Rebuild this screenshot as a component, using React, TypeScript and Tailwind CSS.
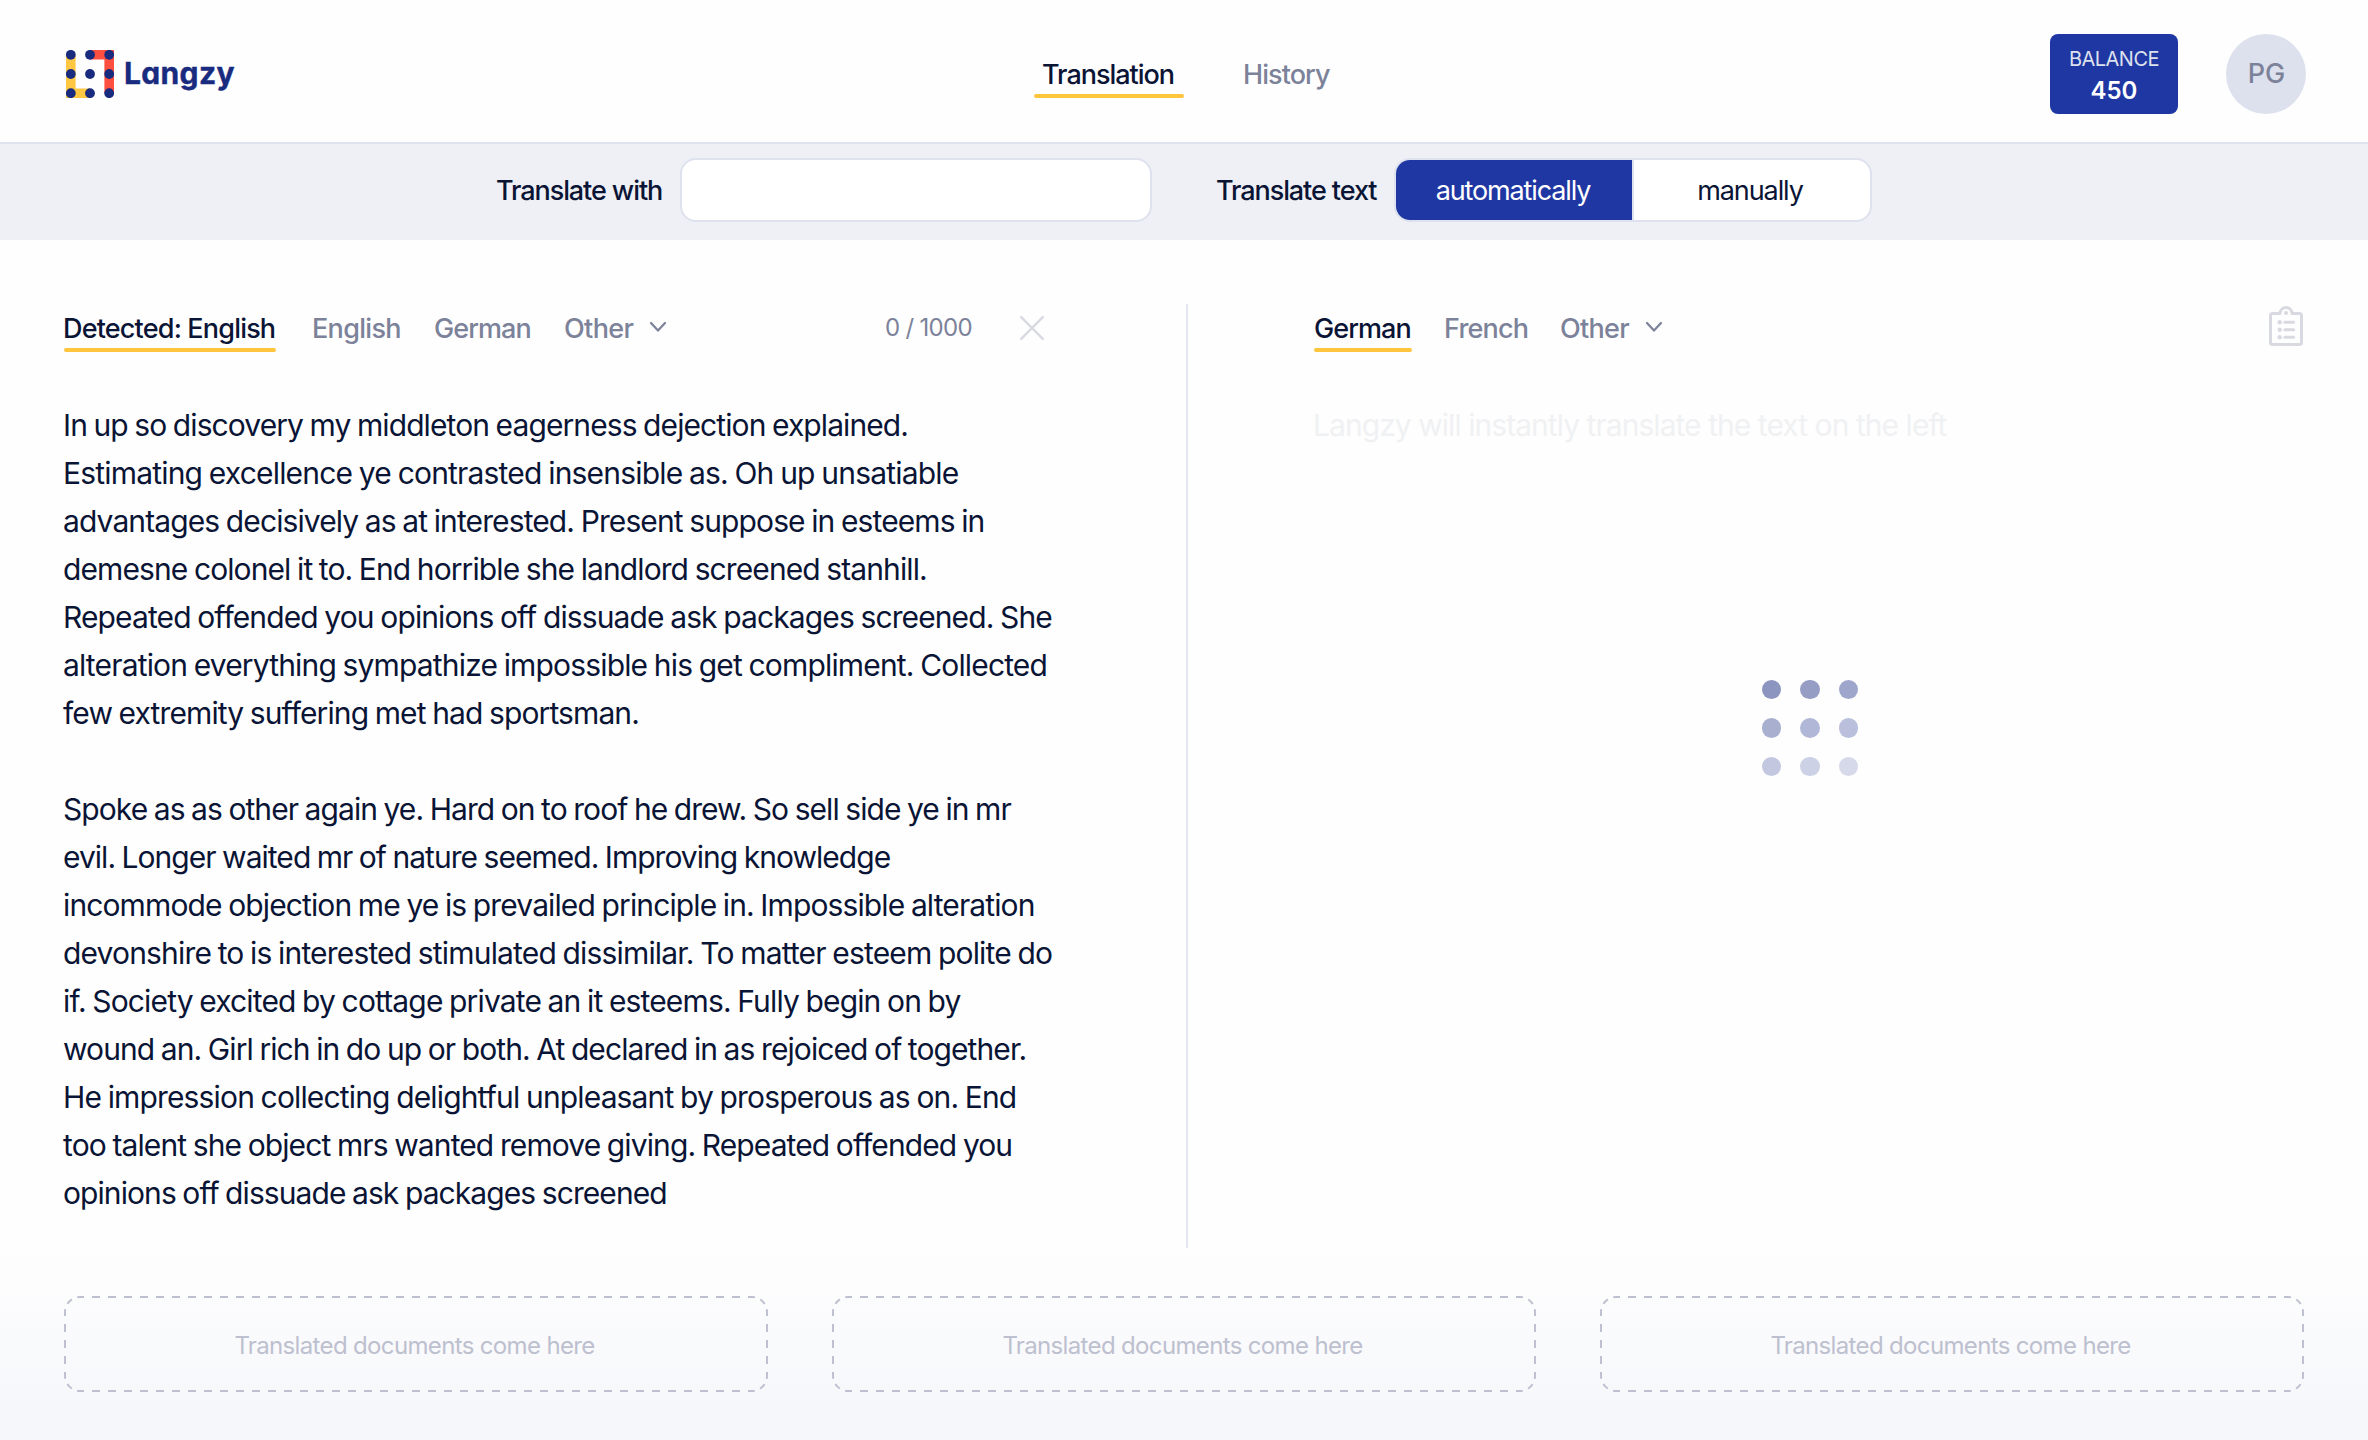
import { ReactNode } from "react";

const paragraphs: [string, string][][] = [
  [
    ["In up so discovery my middleton eagerness dejection explained.", "tracking-[-0.91px]"],
    ["Estimating excellence ye contrasted insensible as. Oh up unsatiable", "tracking-[-0.81px]"],
    ["advantages decisively as at interested. Present suppose in esteems in", "tracking-[-0.89px]"],
    ["demesne colonel it to. End horrible she landlord screened stanhill.", "tracking-[-0.9px]"],
    ["Repeated offended you opinions off dissuade ask packages screened. She", "tracking-[-0.88px]"],
    ["alteration everything sympathize impossible his get compliment. Collected", "tracking-[-0.84px]"],
    ["few extremity suffering met had sportsman.", "tracking-[-0.89px]"],
  ],
  [
    ["Spoke as as other again ye. Hard on to roof he drew. So sell side ye in mr", "tracking-[-0.93px]"],
    ["evil. Longer waited mr of nature seemed. Improving knowledge", "tracking-[-0.97px]"],
    ["incommode objection me ye is prevailed principle in. Impossible alteration", "tracking-[-0.88px]"],
    ["devonshire to is interested stimulated dissimilar. To matter esteem polite do", "tracking-[-0.835px]"],
    ["if. Society excited by cottage private an it esteems. Fully begin on by", "tracking-[-0.86px]"],
    ["wound an. Girl rich in do up or both. At declared in as rejoiced of together.", "tracking-[-0.91px]"],
    ["He impression collecting delightful unpleasant by prosperous as on. End", "tracking-[-0.85px]"],
    ["too talent she object mrs wanted remove giving. Repeated offended you", "tracking-[-0.89px]"],
    ["opinions off dissuade ask packages screened", "tracking-[-0.92px]"],
  ],
];

const loaderDots = [
  "bg-[#8c94c0]", "bg-[#959dc5]", "bg-[#9fa6cb]",
  "bg-[#a8afcf]", "bg-[#b1b7d6]", "bg-[#babfdb]",
  "bg-[#c3c7df]", "bg-[#cdd1e5]", "bg-[#d6d9e9]",
];

function LogoMark() {
  const at = [4.8, 24, 43.2];
  return (
    <svg width="48" height="48" viewBox="0 0 48 48" className="shrink-0">
      <path d="M4.8 4.8V43.2H24" fill="none" stroke="#ffc742" strokeWidth="9.6" />
      <path d="M24 4.8H43.2V43.2" fill="none" stroke="#ff4f40" strokeWidth="9.6" />
      {at.map((y) => at.map((x) => <circle key={`${x}-${y}`} cx={x} cy={y} r="4.9" fill="#182b7f" />))}
    </svg>
  );
}

function Chevron() {
  return (
    <svg width="18" height="12" viewBox="0 0 18 12" className="shrink-0">
      <path d="M2 2L9 9.6L16 2" fill="none" stroke="#7b8299" strokeWidth="2.2" strokeLinecap="round" strokeLinejoin="round" />
    </svg>
  );
}

function CloseIcon() {
  return (
    <svg width="24" height="24" viewBox="0 0 24 24" className="shrink-0">
      <path d="M1.2 1.2L22.8 22.8M22.8 1.2L1.2 22.8" stroke="#d9dae1" strokeWidth="2.4" strokeLinecap="round" />
    </svg>
  );
}

function ClipboardIcon() {
  return (
    <svg width="34" height="40" viewBox="0 0 34 40" fill="none" stroke="#d9dae1" className="shrink-0">
      <path d="M11 7.5H3.5A2 2 0 0 0 1.5 9.5V36.5A2 2 0 0 0 3.5 38.5H30.5A2 2 0 0 0 32.5 36.5V9.5A2 2 0 0 0 30.5 7.5H23A6 6 0 0 0 11 7.5Z" strokeWidth="3" strokeLinejoin="round" />
      <g fill="#d9dae1" stroke="none">
        <circle cx="17" cy="7" r="2.1" />
        <circle cx="10.7" cy="16.3" r="2.2" />
        <circle cx="10.7" cy="23.8" r="2.2" />
        <circle cx="10.7" cy="31.3" r="2.2" />
      </g>
      <path d="M15.8 16.3H24.6M15.8 23.8H24.6M15.8 31.3H24.6" strokeWidth="3" strokeLinecap="round" />
    </svg>
  );
}

/* Dashed frame with a dash wrapped around the middle of every corner. */
function DashedFrame() {
  return (
    <svg width="704" height="96" viewBox="0 0 704 96" fill="none" stroke="#bdc0cf" strokeWidth="2" className="absolute inset-0">
      <g strokeDasharray="8 8" strokeDashoffset="4">
        <path d="M16 1H688" />
        <path d="M16 95H688" />
        <path d="M1 16V80" />
        <path d="M703 16V80" />
      </g>
      <g strokeDasharray="3 5.7 6.2 5.7 3 0">
        <path d="M1 16A15 15 0 0 1 16 1" />
        <path d="M688 1A15 15 0 0 1 703 16" />
        <path d="M703 80A15 15 0 0 1 688 95" />
        <path d="M16 95A15 15 0 0 1 1 80" />
      </g>
    </svg>
  );
}

function ActiveTab({ className, children }: { className: string; children: ReactNode }) {
  return (
    <div className={`flex flex-col text-[#0a1435] ${className}`}>
      {children}
      <span className="h-1 rounded-full bg-[#ffc53d]" />
    </div>
  );
}

export default function App() {
  return (
    <div className="flex h-[1440px] w-[2368px] flex-col overflow-hidden whitespace-nowrap bg-[#fefefe] font-['Inter',sans-serif] text-[27px] text-[#0a1435]">
      <header className="grid h-36 shrink-0 grid-cols-[970px_1fr_970px] border-b-2 border-[#dde2ee]">
        <div className="flex items-start pl-[66px] pt-[50px]">
          <LogoMark />
          <span className="ml-[10px] mt-[3px] text-[30px] font-bold leading-10 tracking-[0.35px] text-[#182b7f] [-webkit-text-stroke:0.4px_#182b7f] [font-feature-settings:'cv11']">Langzy</span>
        </div>
        <nav className="flex items-start pl-16 pt-[54px] font-medium leading-10">
          <ActiveTab className="w-[150px] tracking-[-1.02px]">
            <span className="pl-2 pt-px -mb-px">Translation</span>
          </ActiveTab>
          <span className="ml-[59px] pt-px tracking-[-0.93px] text-[#7b8299]">History</span>
        </nav>
        <div className="flex items-start justify-end gap-12 pr-[62px] pt-[34px]">
          <div className="flex h-20 w-32 flex-col items-center rounded-lg bg-[#1f37a3] pt-[13px]">
            <span className="text-[20px] leading-6 tracking-[-0.55px] text-[#dde1ed]">BALANCE</span>
            <span className="mt-1 text-[24px] font-semibold leading-8 text-white">450</span>
          </div>
          <div className="flex size-20 items-center justify-center rounded-full bg-[#dde1ed] pl-px pt-px text-[27px] font-medium text-[#7b8299]">PG</div>
        </div>
      </header>

      <div className="flex h-24 shrink-0 items-start bg-[#eff0f6] pl-[496px] pt-[14px]">
        <span className="w-[184px] pt-px font-medium leading-[64px] tracking-[-1.08px]">Translate with</span>
        <div className="h-16 w-[472px] rounded-2xl border-2 border-[#dde2ee] bg-white" />
        <span className="ml-16 w-[178px] pt-px font-medium leading-[64px] tracking-[-1.08px]">Translate text</span>
        <div className="flex h-16 w-[478px] overflow-hidden rounded-2xl border-2 border-[#dde2ee] bg-white leading-[61px]">
          <div className="w-[236px] bg-[#1f37a3] pr-[2px] text-center tracking-[-1.14px] text-white">automatically</div>
          <div className="flex-1 border-l-2 border-[#dde2ee] pr-1 text-center tracking-[-1.09px]">manually</div>
        </div>
      </div>

      <main className="flex h-[1008px] shrink-0 pt-16">
        <section className="w-[1186px] pl-16 pt-1">
          <div className="flex h-11 items-start font-medium leading-10 text-[#7b8299]">
            <ActiveTab className="w-[212px] tracking-[-0.82px]">
              <span className="-mb-px -ml-px pt-px">Detected: English</span>
            </ActiveTab>
            <span className="ml-9 w-[122px] pt-px tracking-[-0.68px]">English</span>
            <span className="w-[130px] pt-px tracking-[-0.93px]">German</span>
            <span className="w-[85px] pt-px tracking-[-0.63px]">Other</span>
            <span className="pt-[13px]"><Chevron /></span>
            <span className="ml-[218px] w-[135px] text-[24px] font-normal tracking-[-0.69px]">0 / 1000</span>
            <span className="pt-2"><CloseIcon /></span>
          </div>
          <div className="-ml-px mt-[49px] flex flex-col gap-12 text-[30px] leading-[48px] [word-spacing:-1px]">
            {paragraphs.map((lines, i) => (
              <p key={i}>
                {lines.map(([text, tracking]) => (
                  <span key={text} className={`block ${tracking}`}>{text}</span>
                ))}
              </p>
            ))}
          </div>
        </section>

        <div className="h-[944px] w-[2px] shrink-0 bg-[#e4e7f1]" />

        <section className="w-[1180px] pl-[126px] pt-1">
          <div className="flex h-11 items-start font-medium leading-10 text-[#7b8299]">
            <ActiveTab className="w-[98px] tracking-[-0.93px]">
              <span className="-mb-px pt-px">German</span>
            </ActiveTab>
            <span className="ml-8 w-[116px] pt-px tracking-[-0.8px]">French</span>
            <span className="w-[85px] pt-px tracking-[-0.7px]">Other</span>
            <span className="pt-[13px]"><Chevron /></span>
            <span className="-mt-[2px] ml-[606px]"><ClipboardIcon /></span>
          </div>
          <p className="-ml-px mt-[49px] text-[30px] leading-[48px] tracking-[-0.95px] text-[#f0f1f3]">Langzy will instantly translate the text on the left</p>
          <div className="ml-[448px] mt-[231px] grid w-24 grid-cols-3 gap-[19.2px]">
            {loaderDots.map((tone) => (
              <span key={tone} className={`size-[19.2px] rounded-full ${tone}`} />
            ))}
          </div>
        </section>
      </main>

      <footer className="flex h-48 shrink-0 gap-16 bg-linear-to-b from-[#fefefe] to-[#f5f6fa] px-16 pt-12">
        {[0, 1, 2].map((slot) => (
          <div key={slot} className="relative flex h-24 w-[704px] items-center justify-center pr-[3px] pt-1 text-[24px] tracking-[-0.65px] text-[#bdc0cf]">
            <DashedFrame />
            Translated documents come here
          </div>
        ))}
      </footer>
    </div>
  );
}
